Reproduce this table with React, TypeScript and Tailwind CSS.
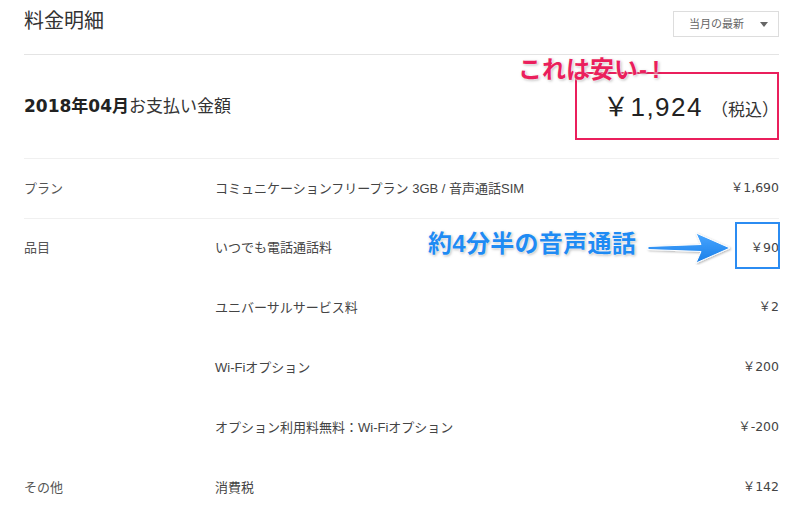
import React from "react";

const font = { fontFamily: '"Liberation Sans", "Noto Sans CJK JP", sans-serif' };
const wide = { fontFamily: '"DejaVu Sans", "Noto Sans CJK JP", sans-serif' };

const items = [
  { label: "品目", name: "いつでも電話通話料", price: "￥90" },
  { label: "", name: "ユニバーサルサービス料", price: "￥2" },
  { label: "", name: "Wi-Fiオプション", price: "￥200" },
  { label: "", name: "オプション利用料無料：Wi-Fiオプション", price: "￥-200" },
  { label: "その他", name: "消費税", price: "￥142" },
];

function Row({ label, name, price, border }: { label: string; name: string; price: string; border?: boolean }) {
  return (
    <div
      className={`flex items-center text-[13px] leading-none text-[#555] ${
        border ? "h-[60px] border-b border-[#f0f0f0]" : "h-[59.8px]"
      }`}
    >
      <div className="w-[191px] shrink-0">{label}</div>
      <div className="flex-1 text-[#444]">{name}</div>
      <div className="text-[#444] text-[12.5px]" style={wide}>
        {price}
      </div>
    </div>
  );
}

export default function App() {
  return (
    <div className="relative w-[800px] h-[522px] overflow-hidden bg-white" style={font}>
      <div className="ml-[24px] w-[755px]">
        {/* Header */}
        <div className="flex justify-between items-start h-[55px] pt-[8px] border-b border-[#e4e4e4]">
          <h1 className="text-[20px] leading-[26px] text-[#333] font-normal">料金明細</h1>
          <div className="mt-[3px] w-[106px] h-[26px] border border-[#ddd] flex items-center justify-between pl-[15px] pr-[10px]">
            <span className="text-[11px] leading-none text-[#666]">当月の最新</span>
            <span className="w-0 h-0 border-l-[4px] border-r-[4px] border-t-[5px] border-l-transparent border-r-transparent border-t-[#666]" />
          </div>
        </div>

        {/* Total */}
        <div className="flex justify-between items-center h-[104px] border-b border-[#f0f0f0] text-[#222]">
          <div className="text-[17px] leading-none">
            <span className="font-bold" style={wide}>2018年04月</span>
            <span className="text-[#333]">お支払い金額</span>
          </div>
          <div className="flex items-baseline leading-none text-[#222]">
            <span className="text-[26px] tracking-[1.5px]">￥1,924</span>
            <span className="text-[17px] ml-[8px] text-[#333]">（税込）</span>
          </div>
        </div>

        <Row label="プラン" name="コミュニケーションフリープラン 3GB / 音声通話SIM" price="￥1,690" border />

        <div className="-mt-px">
          {items.map((it, i) => (
            <Row key={i} label={it.label} name={it.name} price={it.price} />
          ))}
        </div>
      </div>

      {/* Annotations */}
      <div className="absolute left-[575px] top-[72px] w-[204px] h-[68px] border-2 border-[#ea1f5c]" />
      <div className="absolute left-[518px] top-[58px] text-[24px] leading-none font-bold text-[#ea1f5c] [text-shadow:0_0_2px_#fff,0_0_2px_#fff,1px_1px_3px_rgba(0,0,0,0.35)]">
        これは安い<span className="ml-[1px]">-</span>
        <span className="ml-[5px]">!</span>
      </div>

      <div className="absolute left-[735px] top-[222px] w-[45px] h-[47px] border-2 border-[#2b8cf2]" />
      <div className="absolute left-[428px] top-[232px] text-[24px] tracking-[0.3px] leading-none font-bold text-[#1f8bf3] [text-shadow:0_0_2px_#fff,0_0_2px_#fff,1px_1px_3px_rgba(0,0,0,0.35)]">
        約4分半の音声通話
      </div>
      <svg className="absolute left-[646px] top-[231px]" width="88" height="34" viewBox="0 0 88 34">
        <defs>
          <linearGradient id="ag" x1="0" y1="0" x2="0" y2="1">
            <stop offset="0" stopColor="#49a6ff" />
            <stop offset="1" stopColor="#1a7fe8" />
          </linearGradient>
          <filter id="as" x="-10%" y="-20%" width="130%" height="150%">
            <feDropShadow dx="1" dy="1" stdDeviation="1.2" floodColor="#000" floodOpacity="0.3" />
          </filter>
        </defs>
        <path
          d="M2,15.5 L55,13.5 L50,2 L84,17 L50,32 L55,20.5 L2,18.5 Z"
          fill="url(#ag)"
          stroke="#fff"
          strokeWidth="1"
          strokeLinejoin="round"
          filter="url(#as)"
        />
      </svg>
    </div>
  );
}
